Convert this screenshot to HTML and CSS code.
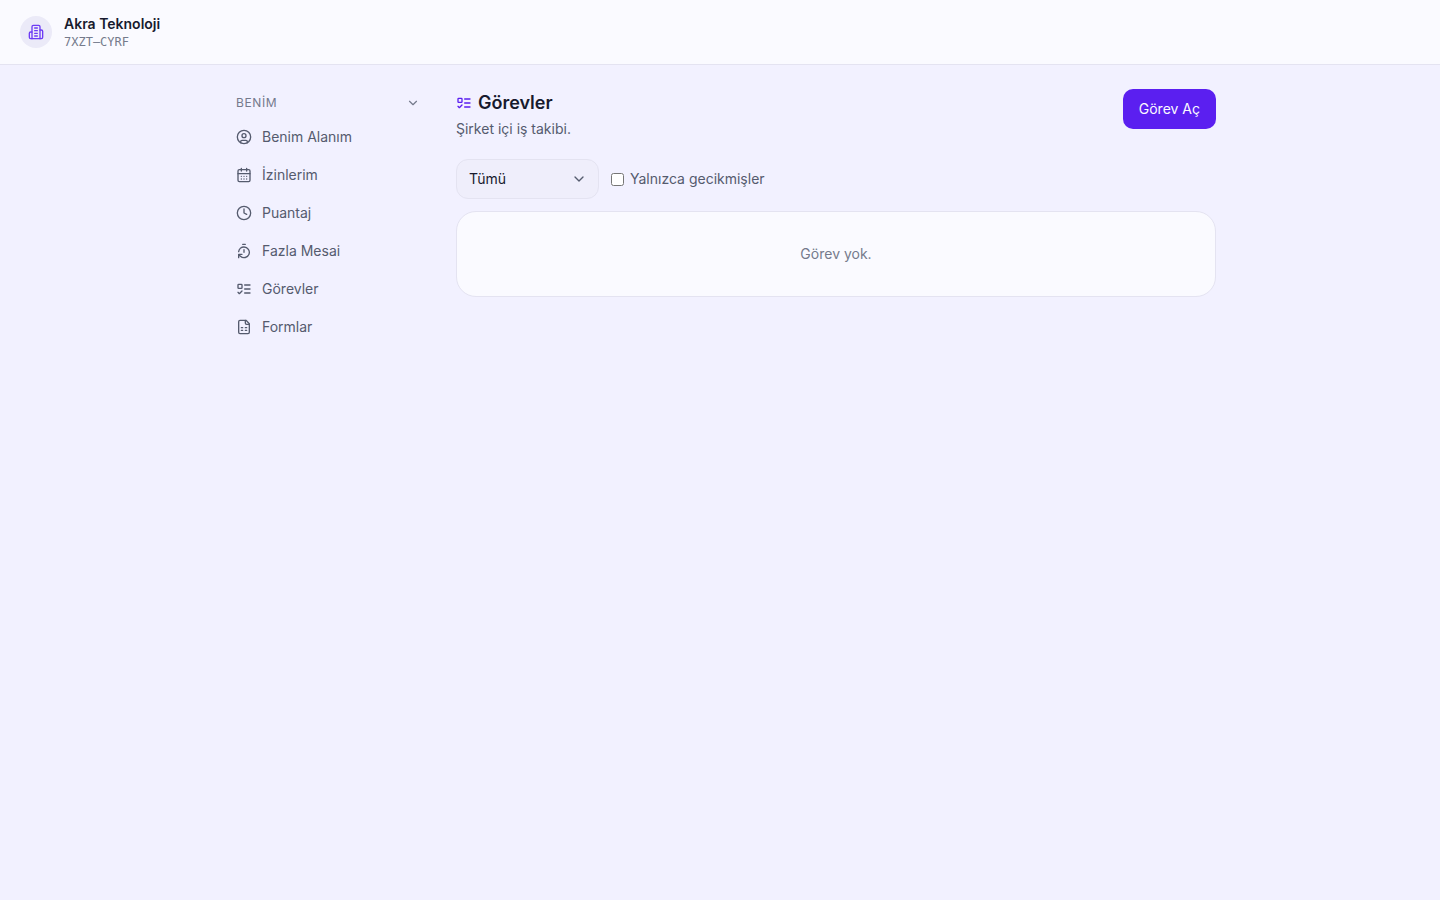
FILE: index.html
```html
<!DOCTYPE html>
<html lang="tr">
<head>
    <meta charset="UTF-8">
    <meta name="viewport" content="width=device-width, initial-scale=1">
    <title>Görevler - Akra Teknoloji</title>
    <link rel="stylesheet" href="styles.css">
</head>
<body>
    <header class="topbar">
        <div class="logo">
            <svg class="icon" viewBox="0 0 24 24"><path d="M6 22V4a2 2 0 0 1 2-2h8a2 2 0 0 1 2 2v18Z"/><path d="M6 12H4a2 2 0 0 0-2 2v6a2 2 0 0 0 2 2h2"/><path d="M18 9h2a2 2 0 0 1 2 2v9a2 2 0 0 1-2 2h-2"/><path d="M10 6h4M10 10h4M10 14h4M10 18h4"/></svg>
        </div>
        <div>
            <div class="company">Akra Teknoloji</div>
            <div class="code">7XZT–CYRF</div>
        </div>
    </header>

    <div class="container">
        <nav class="sidebar">
            <button class="group" type="button">
                BENİM
                <svg class="icon small" viewBox="0 0 24 24"><path d="m6 9 6 6 6-6"/></svg>
            </button>
            <a class="item" href="#">
                <svg class="icon" viewBox="0 0 24 24"><circle cx="12" cy="12" r="10"/><circle cx="12" cy="10" r="3"/><path d="M7 20.662V19a2 2 0 0 1 2-2h6a2 2 0 0 1 2 2v1.662"/></svg>
                Benim Alanım
            </a>
            <a class="item" href="#">
                <svg class="icon" viewBox="0 0 24 24"><path d="M8 2v4M16 2v4"/><rect x="3" y="4" width="18" height="18" rx="2"/><path d="M3 10h18M8 14h.01M12 14h.01M16 14h.01M8 18h.01M12 18h.01M16 18h.01"/></svg>
                İzinlerim
            </a>
            <a class="item" href="#">
                <svg class="icon" viewBox="0 0 24 24"><circle cx="12" cy="12" r="10"/><path d="M12 6v6l4 2"/></svg>
                Puantaj
            </a>
            <a class="item" href="#">
                <svg class="icon" viewBox="0 0 24 24"><path d="M10 2h4M12 14v-4"/><path d="M4 13a8 8 0 0 1 8-7 8 8 0 1 1-5.3 14L4 17.6"/><path d="M9 17H4v5"/></svg>
                Fazla Mesai
            </a>
            <a class="item" href="#">
                <svg class="icon" viewBox="0 0 24 24"><rect x="3" y="5" width="6" height="6" rx="1"/><path d="m3 17 2 2 4-4"/><path d="M13 6h8M13 12h8M13 18h8"/></svg>
                Görevler
            </a>
            <a class="item" href="#">
                <svg class="icon" viewBox="0 0 24 24"><path d="M15 2H6a2 2 0 0 0-2 2v16a2 2 0 0 0 2 2h12a2 2 0 0 0 2-2V7Z"/><path d="M14 2v4a2 2 0 0 0 2 2h4"/><path d="M8 13h2M14 13h2M8 17h2M14 17h2"/></svg>
                Formlar
            </a>
        </nav>

        <main class="content">
            <div class="page-head">
                <div>
                    <h1>
                        <svg class="icon" viewBox="0 0 24 24"><rect x="3" y="5" width="6" height="6" rx="1"/><path d="m3 17 2 2 4-4"/><path d="M13 6h8M13 12h8M13 18h8"/></svg>
                        Görevler
                    </h1>
                    <p>Şirket içi iş takibi.</p>
                </div>
                <button class="primary" type="button">Görev Aç</button>
            </div>

            <div class="filters">
                <select class="status" aria-label="Durum">
                    <option>Tümü</option>
                    <option>Açık</option>
                    <option>Tamamlandı</option>
                </select>
                <label class="check" for="geciken">
                    <input type="checkbox" id="geciken">
                    Yalnızca gecikmişler
                </label>
            </div>

            <div class="card">Görev yok.</div>
        </main>
    </div>
</body>
</html>
```
FILE: styles.css
```css
* {
    box-sizing: border-box;
}
body {
    margin: 0;
    font-family: Inter, "Noto Sans", sans-serif;
    font-size: 14px;
    line-height: 20px;
    color: #555b6e;
    background-color: #f2f1ff;
}
button, select {
    font: inherit;
    cursor: pointer;
}
.icon {
    width: 16px;
    height: 16px;
    flex-shrink: 0;
    fill: none;
    stroke: currentColor;
    stroke-width: 2;
    stroke-linecap: round;
    stroke-linejoin: round;
}
.icon.small {
    width: 14px;
    height: 14px;
}

/* top bar */
.topbar {
    display: flex;
    align-items: center;
    gap: 12px;
    min-height: 65px;
    padding: 0 20px;
    background-color: #fafaff;
    border-bottom: 1px solid #e4e3f1;
}
.logo {
    display: flex;
    align-items: center;
    justify-content: center;
    width: 32px;
    height: 32px;
    border-radius: 50%;
    background-color: #ebeaf8;
    color: #6d3bf5;
}
.company {
    line-height: 20px;
    font-weight: 600;
    color: #171a2e;
}
.code {
    font-family: "DejaVu Sans Mono", monospace;
    font-size: 12px;
    line-height: 16px;
    color: #757a8c;
}

.container {
    display: flex;
    gap: 24px;
    max-width: 1040px;
    margin: 0 auto;
    padding: 24px;
}

/* side menu */
.sidebar {
    display: flex;
    flex-direction: column;
    gap: 2px;
    width: 208px;
    flex-shrink: 0;
}
.group {
    display: flex;
    align-items: center;
    justify-content: space-between;
    height: 28px;
    padding: 0 12px;
    border: none;
    background: none;
    font-size: 12px;
    letter-spacing: 0.05em;
    color: #757a8c;
}
.item {
    display: flex;
    align-items: center;
    gap: 10px;
    padding: 8px 12px;
    border-radius: 10px;
    color: inherit;
    text-decoration: none;
}
.item:hover {
    background-color: #ebeaf8;
}

/* page */
.content {
    flex: 1;
    min-width: 0;
}
.page-head {
    display: flex;
    align-items: flex-start;
    justify-content: space-between;
    margin-bottom: 20px;
}
h1 {
    display: flex;
    align-items: center;
    gap: 6px;
    margin: 0 0 2px;
    font-size: 18px;
    line-height: 28px;
    font-weight: 600;
    color: #171a2e;
}
h1 .icon {
    color: #5b1ff0;
}
.page-head p {
    margin: 0;
}
.primary {
    height: 40px;
    padding: 0 16px;
    border: none;
    border-radius: 10px;
    background-color: #5b1ff0;
    color: #fafaff;
}
.filters {
    display: flex;
    align-items: center;
    gap: 12px;
    margin-bottom: 12px;
}
.status {
    width: 143px;
    height: 40px;
    padding: 0 12px;
    border: 1px solid #e4e3f1;
    border-radius: 12px;
    appearance: none;
    color: #171a2e;
    background: #efeefb url("data:image/svg+xml,%3Csvg xmlns='http://www.w3.org/2000/svg' viewBox='0 0 24 24' fill='none' stroke='%23555b6e' stroke-width='2' stroke-linecap='round' stroke-linejoin='round'%3E%3Cpath d='m6 9 6 6 6-6'/%3E%3C/svg%3E") no-repeat right 11px center / 16px;
}
.check {
    display: flex;
    align-items: center;
    gap: 6px;
    cursor: pointer;
}
.check input {
    width: 13px;
    height: 13px;
    margin: 0;
}
.card {
    padding: 32px;
    border: 1px solid #e4e3f1;
    border-radius: 20px;
    background-color: #fafaff;
    color: #757a8c;
    text-align: center;
}
```
